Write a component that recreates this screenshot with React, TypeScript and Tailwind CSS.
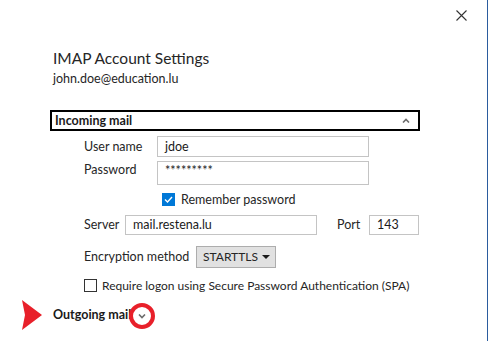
import React from "react";

const font = { fontFamily: 'Lato, "Noto Sans", sans-serif' };

function Field({ value, className }: { value: string; className: string }) {
    return (
        <div
            className={
                "border border-[#c4c4c4] bg-white flex px-[7px] text-[12.5px] leading-[16px] text-[#1a1a1a] " +
                className
            }
        >
            {value}
        </div>
    );
}

export default function App() {
    return (
        <div
            style={font}
            className="w-[488px] h-[341px] bg-white border-r border-[#2b5c9e] flex flex-col text-[#262626] overflow-hidden"
        >
            <div className="flex justify-end pt-[10px] pr-[20px]">
                <svg width="11" height="11" viewBox="0 0 11 11">
                    <path d="M0.5 0.5 L10.5 10.5 M10.5 0.5 L0.5 10.5" stroke="#333" strokeWidth="1.1" />
                </svg>
            </div>

            <div className="pl-[53px] mt-[26px]">
                <h1 className="text-[15.5px] leading-[22px] text-[#262626]">IMAP Account Settings</h1>
                <p className="text-[12.5px] leading-[16px] mt-[2px]">john.doe@education.lu</p>
            </div>

            <div className="ml-[50px] w-[370px] mt-[23px] h-[21px] border-2 border-black flex items-center justify-between pl-[3px] pr-[8px]">
                <span className="text-[12.5px] leading-[16px] font-bold text-[#1a1a1a]">Incoming mail</span>
                <svg width="8" height="5" viewBox="0 0 8 5">
                    <path d="M1 4.5 L4 1.5 L7 4.5" stroke="#6d6d6d" strokeWidth="1.6" fill="none" />
                </svg>
            </div>

            <div className="pl-[84px] text-[12.5px] leading-[16px] whitespace-nowrap">
                <div className="flex items-center mt-[5px] h-[21px]">
                    <span className="w-[73px]">User name</span>
                    <Field value="jdoe" className="w-[212px] h-[21px] items-center" />
                </div>
                <div className="flex items-start mt-[4px] h-[24px]">
                    <span className="w-[73px] pt-[1px]">Password</span>
                    <Field value="*********" className="w-[212px] h-[24px] items-start pt-[1px] text-[11px]" />
                </div>
                <div className="flex items-center mt-[8px] ml-[78px] gap-[6px] h-[13px]">
                    <div className="w-[13px] h-[13px] bg-[#0078d7] flex items-center justify-center">
                        <svg width="9" height="7" viewBox="0 0 9 7">
                            <path d="M1 3.5 L3.5 6 L8 1" stroke="white" strokeWidth="1.4" fill="none" />
                        </svg>
                    </div>
                    <span>Remember password</span>
                </div>
                <div className="flex items-center mt-[9px] h-[20px]">
                    <span className="w-[41px]">Server</span>
                    <Field value="mail.restena.lu" className="w-[192px] h-[20px] items-center" />
                    <span className="ml-[20px] w-[32px]">Port</span>
                    <Field value="143" className="w-[50px] h-[20px] items-center" />
                </div>
                <div className="flex items-center mt-[11px] h-[22px]">
                    <span className="w-[112px]">Encryption method</span>
                    <div className="w-[80px] h-[22px] bg-[#e1e1e1] border border-[#adadad] flex items-center justify-between pl-[6px] pr-[5px] text-[12px]">
                        <span>STARTTLS</span>
                        <svg width="8" height="4" viewBox="0 0 8 4">
                            <path d="M0 0 L8 0 L4 4 Z" fill="#1a1a1a" />
                        </svg>
                    </div>
                </div>
                <div className="flex items-center mt-[11px] gap-[5px] h-[13px] text-[12px]">
                    <div className="w-[13px] h-[13px] border border-[#333] bg-white" />
                    <span>Require logon using Secure Password Authentication (SPA)</span>
                </div>
            </div>

            <div className="flex items-center mt-[8px] pl-[22px] h-[30px]">
                <svg width="20" height="30" viewBox="0 0 20 30">
                    <path d="M0 0 L20 15 L0 30 L3 15 Z" fill="#e8202a" />
                </svg>
                <span className="ml-[11px] text-[12.5px] leading-[16px] font-bold text-[#1a1a1a]">Outgoing mail</span>
                <div className="ml-[-2px] w-[26px] h-[26px] rounded-full border-4 border-[#e8202a] flex items-center justify-center mt-[2px]">
                    <svg width="8" height="5" viewBox="0 0 8 5">
                        <path d="M1 0.5 L4 3.5 L7 0.5" stroke="#6d6d6d" strokeWidth="1.6" fill="none" />
                    </svg>
                </div>
            </div>
        </div>
    );
}
